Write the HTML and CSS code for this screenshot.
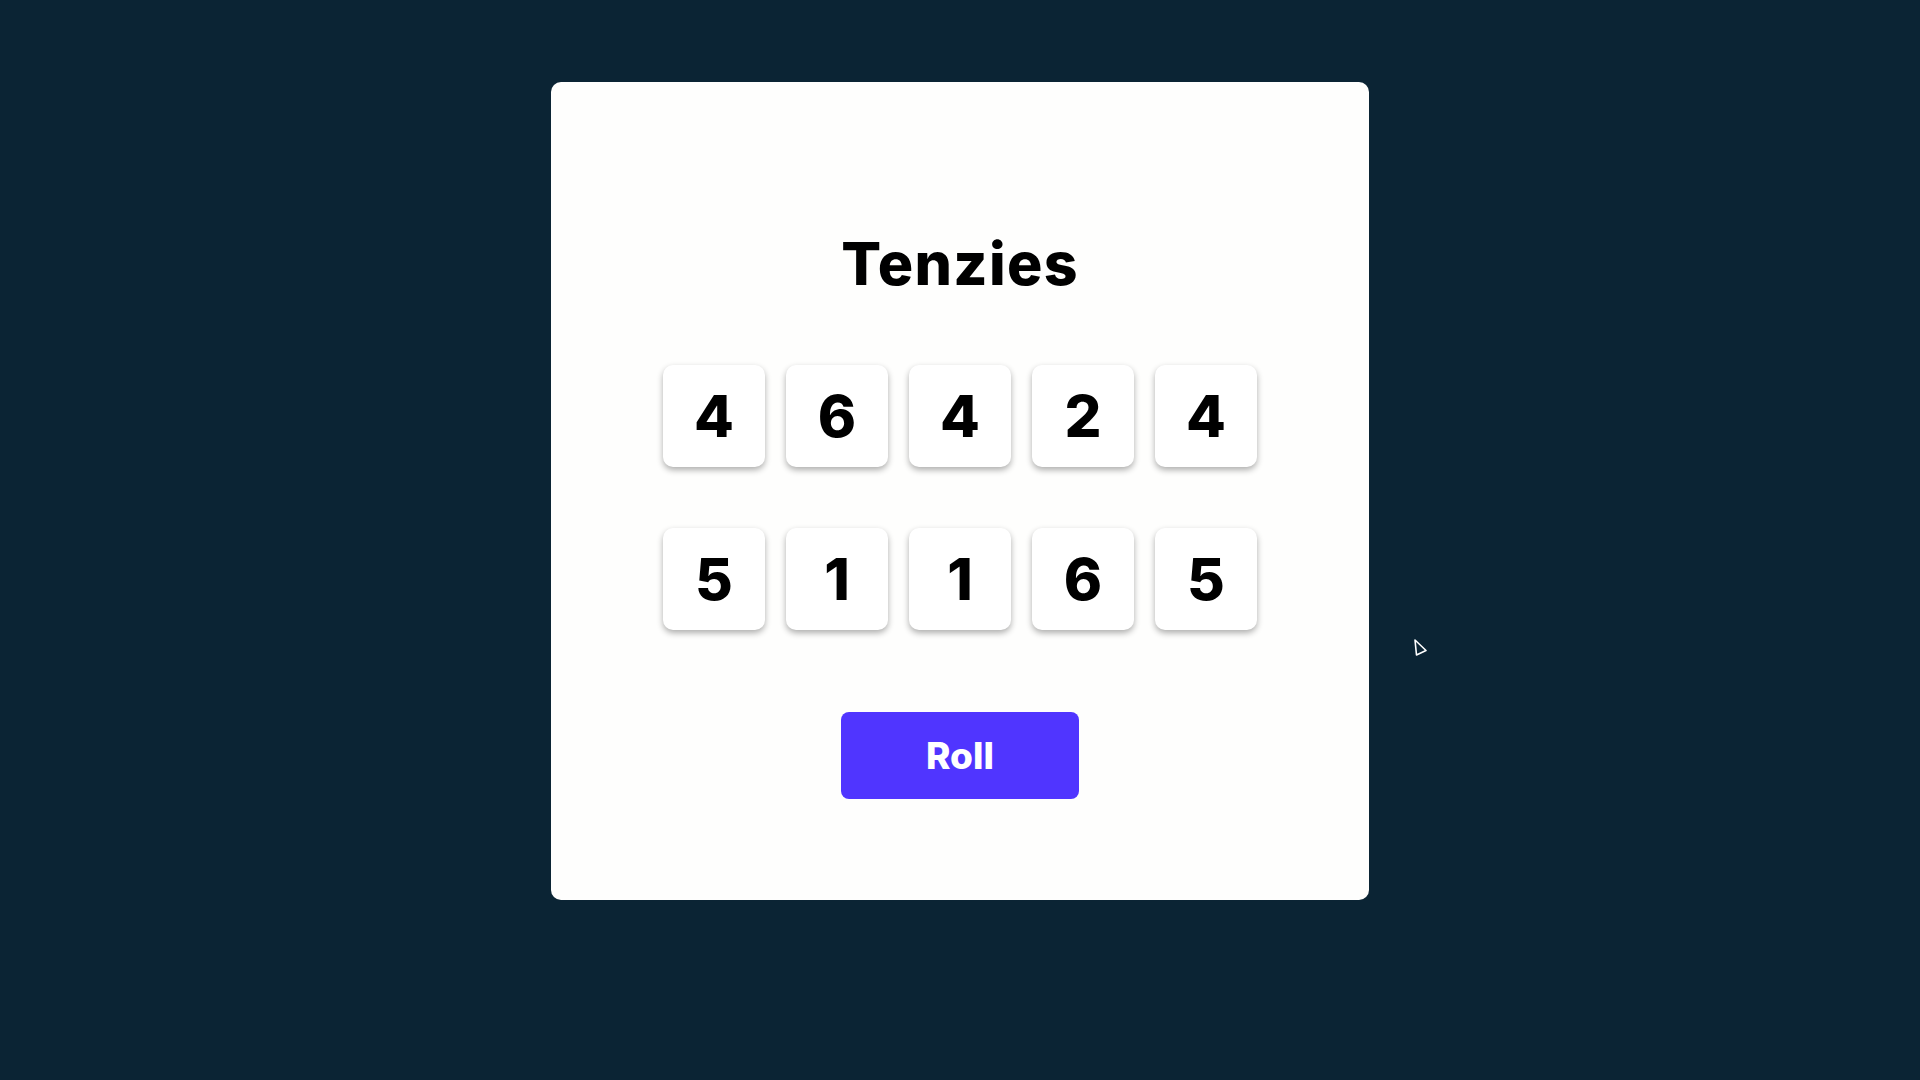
FILE: index.html
```html
<!DOCTYPE html>
<html lang="en">
<head>
<meta charset="utf-8">
<title>Tenzies</title>
<link rel="stylesheet" href="styles.css">
</head>
<body>
<main class="board">
  <h1 class="title">Tenzies</h1>
  <div class="dice">
    <button class="die">4</button>
    <button class="die">6</button>
    <button class="die">4</button>
    <button class="die">2</button>
    <button class="die">4</button>
    <button class="die">5</button>
    <button class="die">1</button>
    <button class="die">1</button>
    <button class="die">6</button>
    <button class="die">5</button>
  </div>
  <button class="roll">Roll</button>
</main>
<svg class="cursor" width="16" height="20" viewBox="0 0 16 20">
  <polygon points="2,2 3.5,17 13,12.5" fill="#0B2434" stroke="#ffffff" stroke-width="1.6" stroke-linejoin="round"/>
</svg>
</body>
</html>
```
FILE: styles.css
```css
html, body {
  margin: 0;
  padding: 0;
}
body {
  background: #0B2434;
  width: 1920px;
  height: 1080px;
  display: flex;
  justify-content: center;
  align-items: flex-start;
  padding-top: 82px;
  box-sizing: border-box;
  font-family: Inter, "Liberation Sans", sans-serif;
  position: relative;
  overflow: hidden;
}
.board {
  width: 818px;
  height: 818px;
  background: #FEFEFD;
  border-radius: 10px;
  box-sizing: border-box;
  padding-top: 152px;
  display: flex;
  flex-direction: column;
  align-items: center;
}
.title {
  margin: 0;
  font-size: 59px;
  line-height: 59px;
  font-weight: 800;
  color: #000;
  letter-spacing: 1.3px;
}
.dice {
  margin-top: 72px;
  display: grid;
  grid-template-columns: repeat(5, 102px);
  grid-auto-rows: 102px;
  column-gap: 21px;
  row-gap: 61px;
}
.die {
  border: none;
  background: #FFFFFF;
  border-radius: 10px;
  box-shadow: 0 3px 6px rgba(0, 0, 0, 0.32);
  font-family: Inter, "Liberation Sans", sans-serif;
  font-size: 58px;
  font-weight: 800;
  color: #000;
  padding: 0;
  display: flex;
  align-items: center;
  justify-content: center;
}
.roll {
  margin-top: 82px;
  width: 238px;
  height: 87px;
  border: none;
  border-radius: 8px;
  background: #5035FF;
  color: #FFFFFF;
  font-family: Inter, "Liberation Sans", sans-serif;
  font-size: 37px;
  font-weight: 800;
  padding: 0;
}
.cursor {
  position: absolute;
  left: 1413px;
  top: 638px;
}
```
